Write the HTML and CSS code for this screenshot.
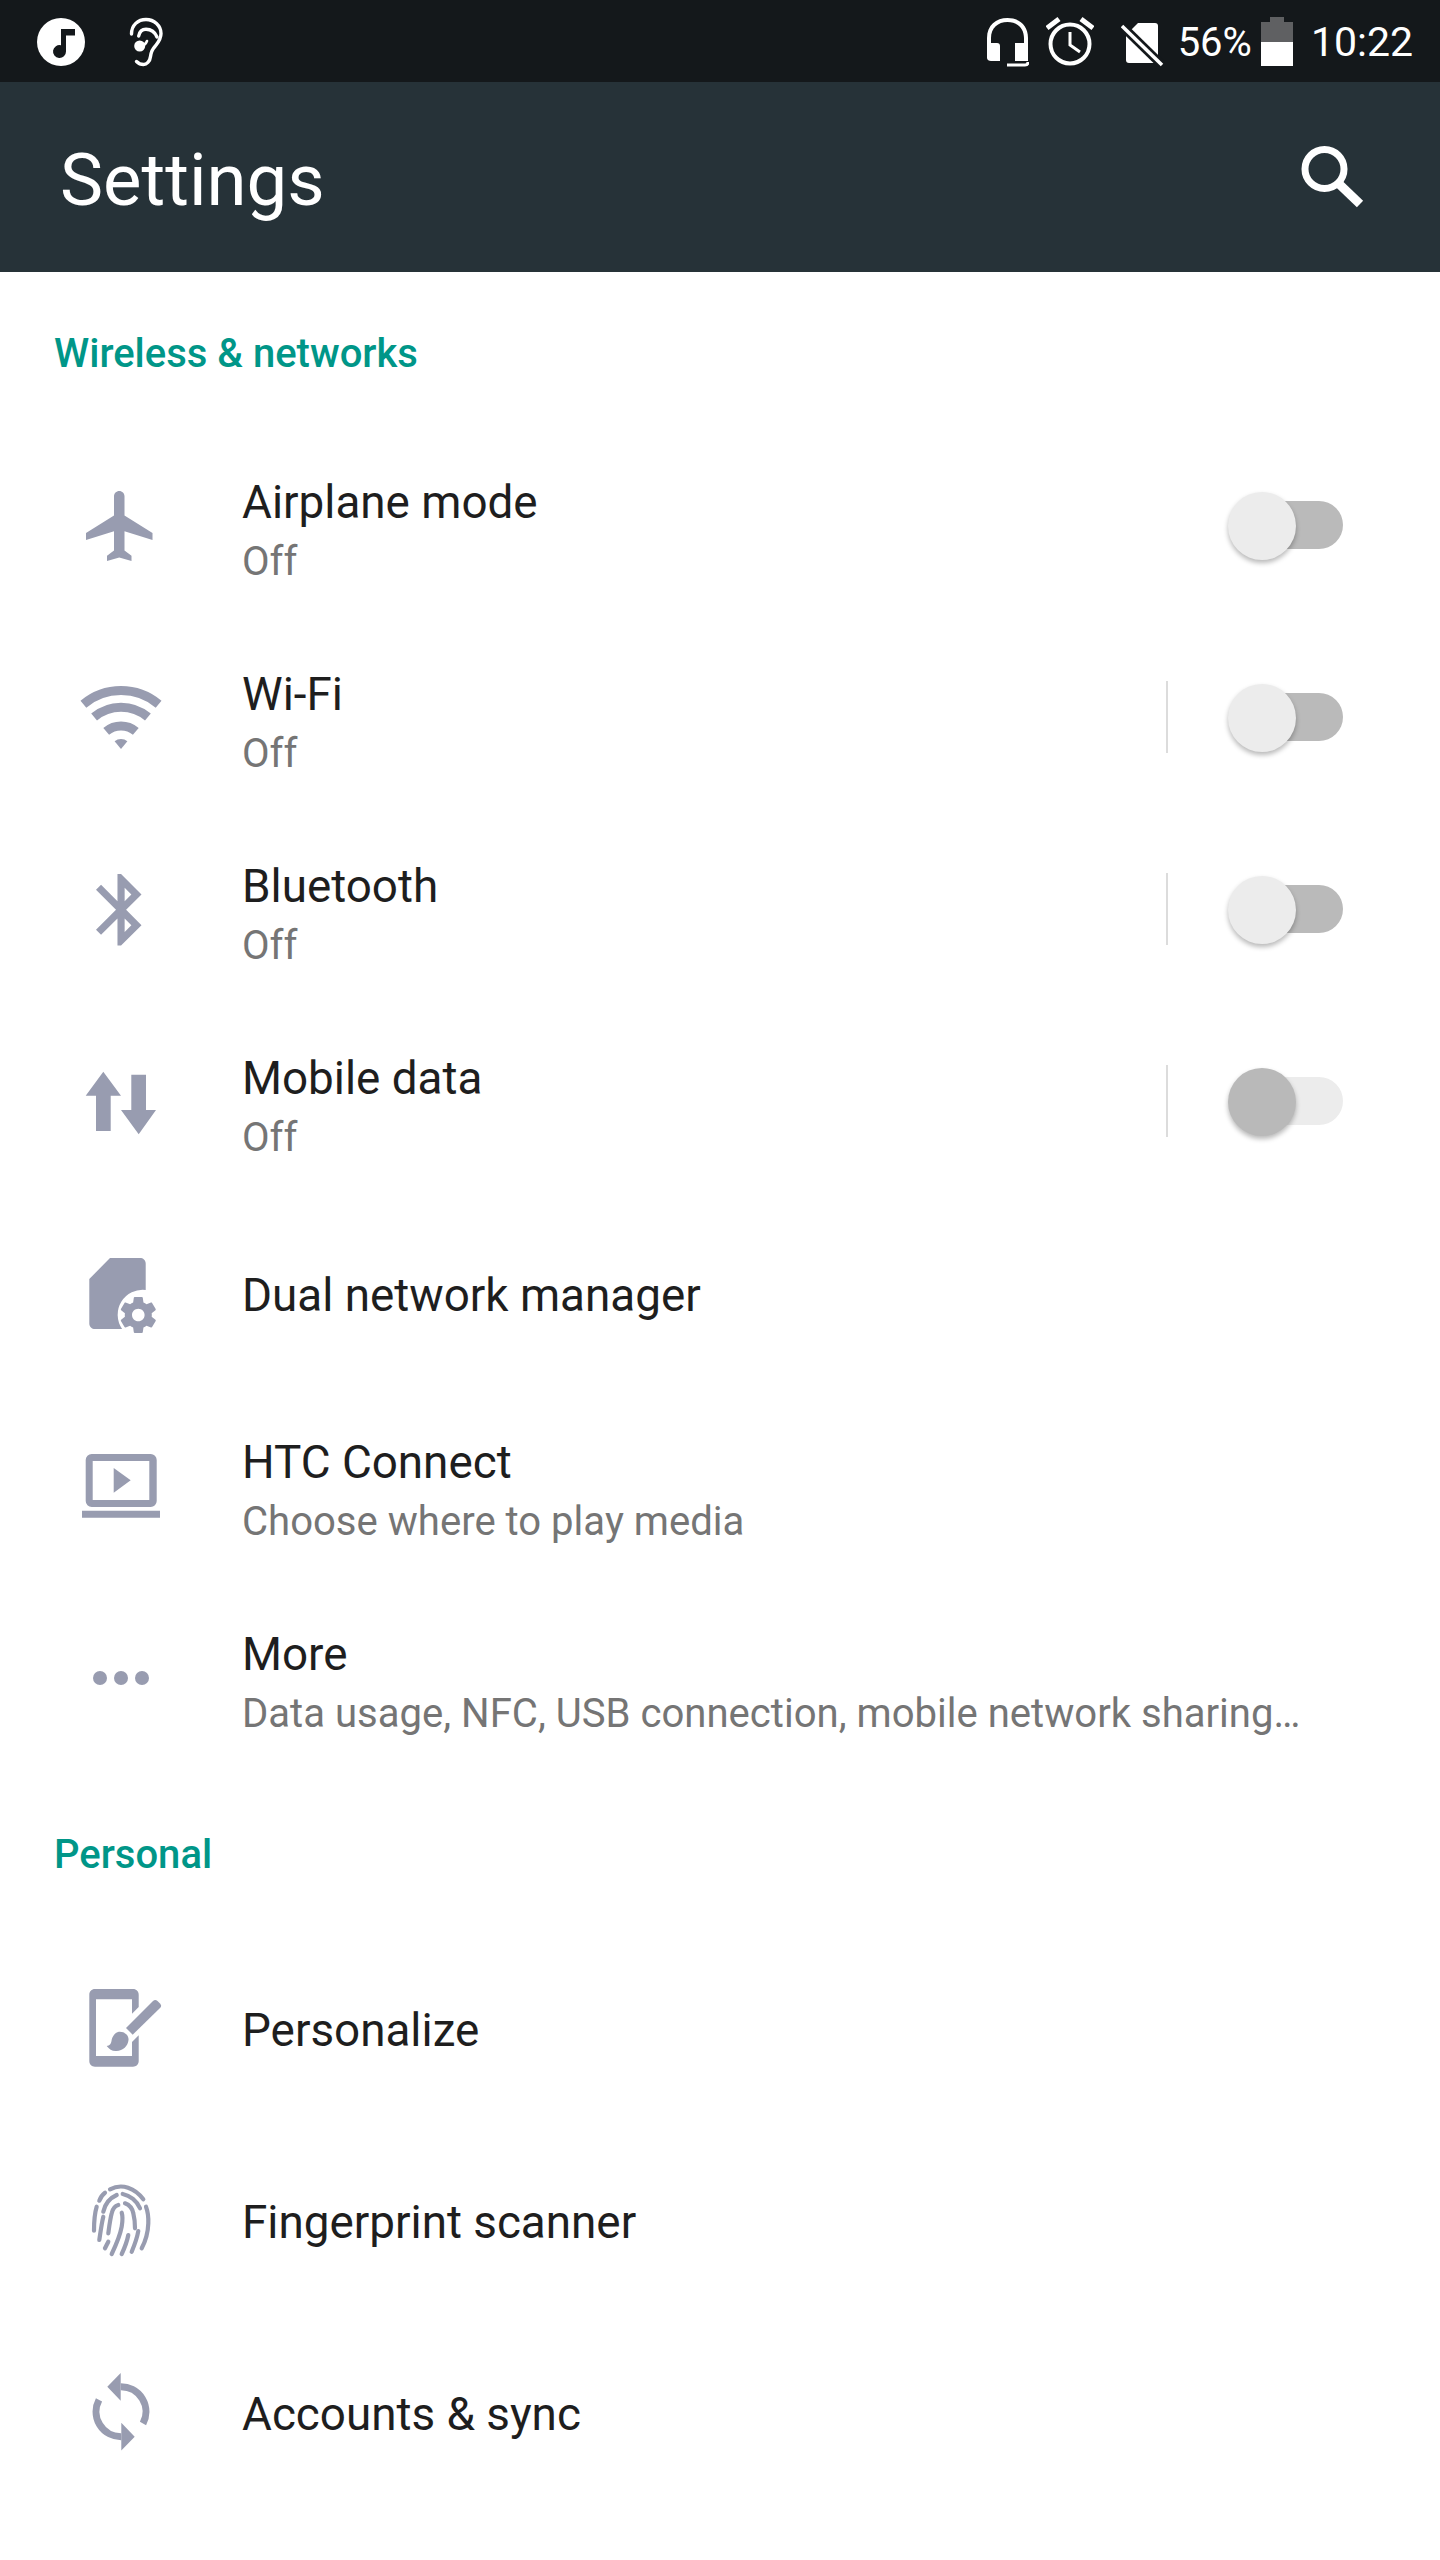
FILE: index.html
```html
<!DOCTYPE html>
<html>
<head>
    <title>Settings</title>
    <meta name="viewport" content="width=device-width, initial-scale=1.0">
    <link rel="stylesheet" href="styles.css">
</head>
<body>
    <div id="status-bar">
      <div class="status-left">
        <svg class="s-icon" width="50" height="50" viewBox="0 0 50 50"><circle cx="25" cy="25" r="24" fill="#fff"/><path d="M25 12h14v6.500h-9v16a6.500 6.500 0 1 1-5-6.300z" fill="#14181b"/></svg>
        <svg class="s-icon ear" width="36" height="50" viewBox="0 0 36 50" fill="none" stroke="#fff" stroke-width="3.400" stroke-linecap="round"><path d="M3.500 17C3.500 8 10 2.500 18 2.500c8 0 15 6 15 14 0 6-3 9-6 13-3 3-4 6-4.500 10-.5 5-4 8-7 8-3 0-5-1-7-3"/><path d="M10.700 19C11.500 15 14 12.300 18 12.300c5 0 9 3 11 7.700"/><circle cx="11.700" cy="29" r="5.500" fill="#fff" stroke="none"/><path d="M11 29c4 0 7-2 8-5" stroke-width="2.600"/></svg>
      </div>
      <div class="status-right">
        <svg class="s-icon head" width="42" height="50" viewBox="0 0 42 50"><path d="M0 41V21C0 8 9 1 20.500 1S41 8 41 21v20h-4V21C37 11 30 5 20.500 5S4 11 4 21v5h6c2 0 3 1 3 3v15H4c-2 0-4-1-4-3zM28 26h13v18H28z" fill="#fff"/><path d="M20 48h18c2 0 3-1 3-3" fill="none" stroke="#fff" stroke-width="3"/></svg>
        <svg class="s-icon clock" width="48" height="50" viewBox="0 0 48 50" fill="none" stroke="#fff"><circle cx="24" cy="27" r="19.500" stroke-width="4"/><path d="M24 15v13l10 7" stroke-width="3"/><path d="M1 11 13 2M47 11 35 2" stroke-width="5"/></svg>
        <svg class="s-icon sim" width="44" height="50" viewBox="0 0 44 50"><path d="M17 6H34c2 0 3 1 3 3V43c0 2-1 3-3 3H8c-2 0-3-1-3-3V18z" fill="#fff"/><path d="M1 9 41 48" stroke="#14181b" stroke-width="9"/><path d="M1 9 41 48" stroke="#fff" stroke-width="3.500"/></svg>
        <span class="pct">56%</span>
        <svg class="s-icon batt" width="32" height="50" viewBox="0 0 32 50"><path d="M9 0h14v5h9v20H0V5h9z" fill="#5f6062"/><path d="M0 25h32v24H0z" fill="#fff"/></svg>
        <span class="time">10:22</span>
      </div>
    </div>

    <div id="app-bar">
      <h1>Settings</h1>
      <svg width="64" height="64" viewBox="0 0 64 64" fill="none" stroke="#fff"><circle cx="24.500" cy="24" r="19.500" stroke-width="7"/><path d="M37 37 60 59" stroke-width="9"/></svg>
    </div>

    <div class="section-head first">Wireless &amp; networks</div>

    <div class="row two">
      <svg class="icon" viewBox="0 0 96 96"><path transform="translate(7 7) scale(3.500)" d="M21 16v-2l-8-5V3.500c0-.83-.67-1.500-1.500-1.500S10 2.670 10 3.500V9l-8 5v2l8-2.500V19l-2 1.500V22l3.500-1 3.500 1v-1.500L13 19v-5.500l8 2.500z"/></svg>
      <div class="text"><div class="title">Airplane mode</div><div class="sub">Off</div></div>
      <div class="switch"><div class="track"></div><div class="thumb"></div></div>
    </div>

    <div class="row two">
      <svg class="icon" viewBox="0 0 96 96"><g fill="none" stroke-width="9"><path d="M11.400 35.200A58.500 58.500 0 0 1 86.600 35.200"/><path d="M22.100 48A41.800 41.800 0 0 1 75.900 48"/><path d="M34.200 62.400A23 23 0 0 1 63.800 62.400"/></g><path d="M49 80 42.600 72.300A10 10 0 0 1 55.400 72.300z" stroke="none"/></svg>
      <div class="text"><div class="title">Wi-Fi</div><div class="sub">Off</div></div>
      <div class="divider"></div>
      <div class="switch"><div class="track"></div><div class="thumb"></div></div>
    </div>

    <div class="row two">
      <svg class="icon" viewBox="0 0 96 96"><path transform="translate(6.100 5.840) scale(3.580)" d="M17.710 7.710L12 2h-1v7.590L6.410 5 5 6.410 10.590 12 5 17.590 6.410 19 11 14.410V22h1l5.710-5.710-4.300-4.290 4.300-4.290zM13 5.830l1.880 1.880L13 9.590V5.830zm1.880 10.460L13 18.170v-3.760l1.880 1.880z"/></svg>
      <div class="text"><div class="title">Bluetooth</div><div class="sub">Off</div></div>
      <div class="divider"></div>
      <div class="switch"><div class="track"></div><div class="thumb"></div></div>
    </div>

    <div class="row two">
      <svg class="icon" viewBox="0 0 96 96"><path d="M31.300 18.700 49 42.700H38.700V78H24V42.700H13.700zM59.300 21.700H74V57H84L66.700 81.300 49 57H59.300z"/></svg>
      <div class="text"><div class="title">Mobile data</div><div class="sub">Off</div></div>
      <div class="divider"></div>
      <div class="switch disabled"><div class="track"></div><div class="thumb"></div></div>
    </div>

    <div class="row one">
      <svg class="icon" viewBox="0 0 96 96"><g transform="translate(0 3)"><path d="M38 10H68c3 0 5.700 2 5.700 5.500V42a25 25 0 0 0-23.600 39H23c-3 0-5.700-2-5.700-5.500V31z"/><path transform="translate(44.700 45.400) scale(1.800)" d="M19.430 12.980c.04-.32.07-.64.07-.98s-.03-.66-.07-.98l2.110-1.650c.19-.15.24-.42.120-.64l-2-3.460c-.12-.22-.39-.3-.61-.22l-2.490 1c-.52-.4-1.080-.73-1.690-.98l-.38-2.650C14.460 2.180 14.250 2 14 2h-4c-.25 0-.46.180-.49.420l-.38 2.650c-.61.250-1.170.590-1.690.980l-2.490-1c-.23-.09-.49 0-.61.220l-2 3.460c-.13.220-.07.490.12.640l2.110 1.650c-.04.320-.07.650-.07.980s.03.660.07.980l-2.110 1.650c-.19.150-.24.420-.12.640l2 3.460c.12.220.39.300.61.220l2.490-1c.52.400 1.080.730 1.690.980l.38 2.650c.03.240.24.420.49.420h4c.25 0 .46-.180.49-.420l.38-2.650c.61-.250 1.170-.590 1.690-.980l2.490 1c.23.090.49 0 .61-.220l2-3.460c.12-.22.07-.49-.12-.64l-2.110-1.650zM12 15.500c-1.930 0-3.500-1.570-3.500-3.500s1.570-3.500 3.500-3.500 3.500 1.570 3.500 3.500-1.570 3.500-3.500 3.500z"/></g></svg>
      <div class="text"><div class="title">Dual network manager</div></div>
    </div>

    <div class="row two">
      <svg class="icon" viewBox="0 0 96 96"><path fill-rule="evenodd" d="M19.700 17H78.700a6 6 0 0 1 6 6V64a6 6 0 0 1-6 6H19.700a6 6 0 0 1-6-6V23a6 6 0 0 1 6-6zM20.700 24V63H77.300V24z"/><path d="M10 73.700H88V80.700H10zM41.700 31 58.700 43.300 41.700 55.700z"/></svg>
      <div class="text"><div class="title">HTC Connect</div><div class="sub">Choose where to play media</div></div>
    </div>

    <div class="row two">
      <svg class="icon" viewBox="0 0 96 96"><circle cx="28" cy="49" r="7"/><circle cx="49" cy="49" r="7"/><circle cx="70" cy="49" r="7"/></svg>
      <div class="text"><div class="title">More</div><div class="sub">Data usage, NFC, USB connection, mobile network sharing…</div></div>
    </div>

    <div class="section-head">Personal</div>

    <div class="row one low">
      <svg class="icon" viewBox="0 0 96 96"><path d="M23 7H61c3.500 0 5.700 2.500 5.700 5.700V25L60 31.700V17.300H24V74H60V60L66.700 53.300V79c0 3.500-2.500 5.700-5.700 5.700H23c-3.500 0-5.700-2.500-5.700-5.700V12.700C17.300 9.500 19.500 7 23 7z"/><path d="M54 46 81 19c1.500-1.500 3-1.500 4.500 0l2.500 2.500c1.500 1.500 1.500 3 0 4.500L60.700 52.700z"/><path d="M46 50c6-1 11 3 10.500 8-.5 6-6 11.500-13 11-3.500 0-6.500-2-8.800-5 3-.3 4.300-2 4.800-5 .5-4 3-8 6.500-9z"/></svg>
      <div class="text"><div class="title">Personalize</div></div>
    </div>

    <div class="row one low">
      <svg class="icon" viewBox="0 0 96 96"><g fill="none" stroke-width="4.200" stroke-linecap="round"><path d="M38 15.300C50 9 63 14 71.300 25.300"/><path d="M27.300 26.700C28.500 23.500 30.500 20.500 33 18.700"/><path d="M31.300 37.700C33 30 38 24 44.700 21"/><path d="M50.700 20C58 21.500 65 27 68 34.300"/><path d="M24.700 32.700C22.500 40 22 48 22 56.700"/><path d="M74 32.700C76 38 76.500 44 76.300 49.300 76 58 73.500 67 69.700 74.300"/><path d="M31.300 42.700C29.500 50 28.500 58 27.300 66"/><path d="M46.300 31C42.500 32 40.500 35.500 39.700 39.300 38 46 37.300 52 36.300 59.300"/><path d="M53 29.300C57.500 31 60.500 35 61.300 39.300 62.500 44 63 49 63 54.300"/><path d="M49.700 38.700C51 43 50.500 48 49.700 52.700 48 62 44 71 39.700 80"/><path d="M33 74.300 36.300 67.700"/><path d="M56.300 61C55 68 52.500 74 49.700 80"/><path d="M66.300 57C65 64.500 62.500 71 59.700 77.700"/></g></svg>
      <div class="text"><div class="title">Fingerprint scanner</div></div>
    </div>

    <div class="row one low">
      <svg class="icon" viewBox="0 0 96 96"><g fill="none" stroke-width="7"><path d="M48.700 20.700A25 25 0 0 1 71 57.500"/><path d="M49.300 70.700A25 25 0 0 1 27 33.900"/></g><path d="M35.300 20.700 48.700 7V34.700zM62.700 70.700 49.300 84.400V56.700z"/></svg>
      <div class="text"><div class="title">Accounts &amp; sync</div></div>
    </div>
</body>
</html>
```

FILE: styles.css
```css
body {
    font-family: Roboto, "Noto Sans", sans-serif;
    margin: 0;
    padding: 0;
    background-color: white;
    width: 1440px;
    height: 2560px;
    overflow: hidden;
}
#status-bar {
    height: 82px;
    background-color: #14181b;
    color: white;
    display: flex;
    justify-content: space-between;
    align-items: center;
    box-sizing: border-box;
    padding: 2px 27px 0 36px;
}
.status-left, .status-right {
    display: flex;
    align-items: center;
}
.s-icon {
    display: block;
}
.ear {
    margin-left: 42px;
}
.head {
    margin-right: 17px;
}
.clock {
    margin-right: 27px;
}
.sim {
    margin-right: 13px;
}
.pct {
    font-size: 40px;
    margin-right: 9px;
}
.time {
    font-size: 41px;
    margin-left: 18px;
}
#app-bar {
    height: 190px;
    background-color: #263238;
    display: flex;
    justify-content: space-between;
    align-items: center;
    box-sizing: border-box;
    padding: 0 76px 0 60px;
}
h1 {
    font-size: 72.5px;
    font-weight: 400;
    color: white;
    margin: 6px 0 0 0;
}
.section-head {
    font-size: 40px;
    font-weight: 500;
    color: #009688;
    padding-left: 54px;
    height: 159px;
    line-height: 44px;
    padding-top: 60px;
    box-sizing: border-box;
}
.section-head.first {
    height: 157px;
}
.row {
    height: 192px;
    display: flex;
    align-items: center;
    box-sizing: border-box;
    padding-left: 72px;
    padding-right: 97px;
}
.icon {
    width: 96px;
    height: 96px;
    flex-shrink: 0;
    margin-right: 74px;
    fill: #989cb0;
    stroke: #989cb0;
    stroke-width: 0;
}
.low .icon {
    margin-top: 4px;
}
.text {
    flex: 1;
}
.two .text {
    padding-top: 12px;
}
.one .text {
    padding-top: 5px;
}
.title {
    font-size: 45.8px;
    color: #1e1e1e;
    line-height: 58px;
}
.sub {
    font-size: 40.1px;
    color: #757575;
    line-height: 54px;
    margin-top: 3px;
}
.divider {
    width: 2px;
    height: 72px;
    background-color: #dcdcdc;
    margin-right: 60px;
}
.switch {
    position: relative;
    width: 115px;
    height: 72px;
}
.track {
    position: absolute;
    left: 14px;
    right: 0;
    top: 12px;
    height: 48px;
    border-radius: 24px;
    background-color: #bababa;
}
.thumb {
    position: absolute;
    left: 0;
    top: 3px;
    width: 68px;
    height: 68px;
    border-radius: 50%;
    background-color: #ececec;
    box-shadow: 0 3px 5px rgba(0,0,0,0.28);
}
.disabled .track {
    background-color: #ececec;
}
.disabled .thumb {
    background-color: #b9b9b9;
}
```
